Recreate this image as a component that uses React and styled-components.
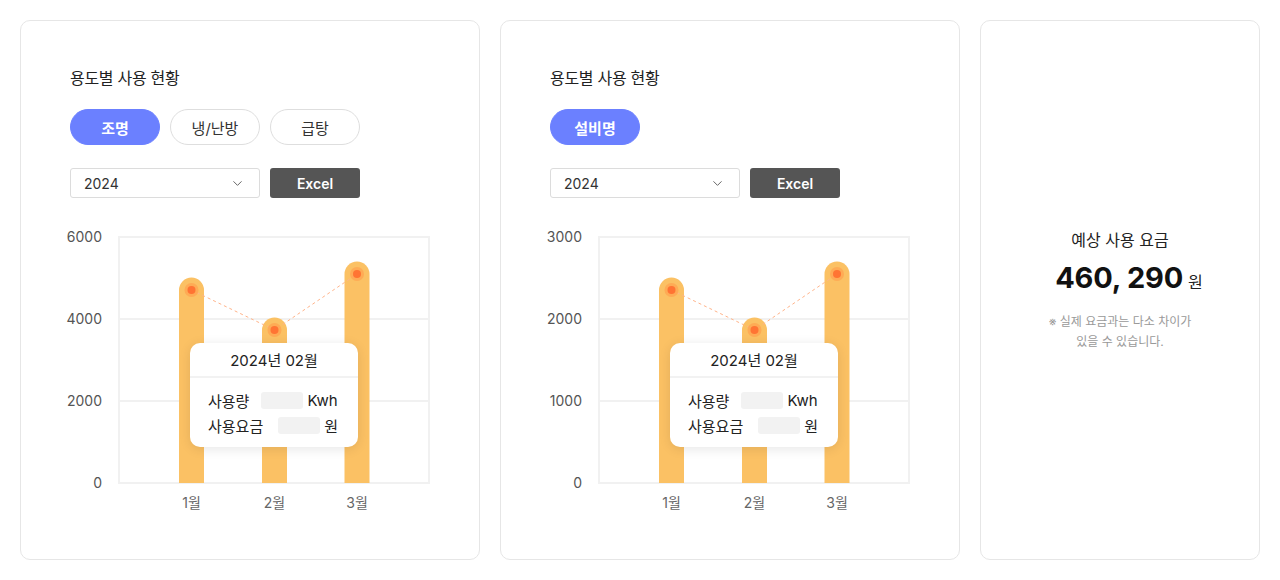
import React from "react";
import styled, { createGlobalStyle } from "styled-components";
import { ChevronDown } from "lucide-react";

const Global = createGlobalStyle`
  html, body { margin: 0; padding: 0; background: #fff; }
  body { font-family: Inter, "Noto Sans CJK KR", sans-serif; color: #222; }
  * { box-sizing: border-box; }
`;

const Page = styled.div`
  display: flex;
  gap: 20px;
  padding: 20px;
  width: 1280px;
  height: 580px;
`;

const Card = styled.div`
  width: ${(p) => p.$w}px;
  height: 540px;
  border: 1px solid #e6e6e6;
  border-radius: 10px;
  background: #fff;
  padding: 46px 0 0 49px;
  display: flex;
  flex-direction: column;
`;

const Title = styled.div`
  font-size: 16px;
  line-height: 22px;
  font-weight: 400;
  color: #222;
  letter-spacing: -0.3px;
`;

const PillRow = styled.div`
  display: flex;
  gap: 10px;
  margin-top: 20px;
`;

const Pill = styled.button`
  width: 90px;
  height: 36px;
  border-radius: 18px;
  font-family: inherit;
  font-size: 15px;
  font-weight: ${(p) => (p.$active ? 700 : 400)};
  color: ${(p) => (p.$active ? "#fff" : "#333")};
  background: ${(p) => (p.$active ? "#6b80ff" : "#fff")};
  border: 1px solid ${(p) => (p.$active ? "#6b80ff" : "#dedede")};
  padding: 0;
`;

const Controls = styled.div`
  display: flex;
  gap: 10px;
  margin-top: 23px;
`;

const Select = styled.div`
  width: 190px;
  height: 30px;
  border: 1px solid #dcdcdc;
  border-radius: 3px;
  display: flex;
  align-items: center;
  justify-content: space-between;
  padding: 0 14px 0 13px;
  font-size: 14px;
  color: #333;
`;

const ExcelBtn = styled.button`
  width: 90px;
  height: 30px;
  border: none;
  border-radius: 3px;
  background: #555;
  color: #fff;
  font-family: inherit;
  font-size: 14px;
  font-weight: 600;
  padding: 0;
`;

const ChartWrap = styled.div`
  position: relative;
  width: 390px;
  height: 295px;
  margin: 27px 0 0 -10px;
`;

const Tooltip = styled.div`
  position: absolute;
  left: 130px;
  top: 118px;
  width: 168px;
  height: 104px;
  background: #fff;
  border-radius: 10px;
  box-shadow: 0 2px 12px rgba(0, 0, 0, 0.1);
`;

const TipHead = styled.div`
  height: 35px;
  border-bottom: 2px solid #f2f2f2;
  display: flex;
  align-items: center;
  justify-content: center;
  font-size: 15px;
  color: #222;
`;

const TipBody = styled.div`
  padding: 10px 0 0 18px;
  display: flex;
  flex-direction: column;
`;

const TipRow = styled.div`
  display: flex;
  align-items: center;
  height: 25px;
  font-size: 15px;
  color: #222;
`;

const Blank = styled.span`
  display: inline-block;
  width: 42px;
  height: 17px;
  background: #f2f2f2;
  border-radius: 3px;
  margin: 0 4px 0 ${(p) => p.$ml}px;
`;

const SummaryCard = styled.div`
  width: 280px;
  height: 540px;
  border: 1px solid #e6e6e6;
  border-radius: 10px;
  display: flex;
  flex-direction: column;
  align-items: center;
  padding-top: 208px;
`;

const SumTitle = styled.div`
  font-size: 16px;
  line-height: 22px;
  font-weight: 400;
  color: #222;
`;

const Amount = styled.div`
  display: flex;
  align-items: baseline;
  gap: 5px;
  margin-top: 9px;
  margin-left: 18px;
`;

const Big = styled.span`
  font-size: 29px;
  line-height: 36px;
  font-weight: 700;
  color: #111;
  letter-spacing: -0.2px;
`;

const Won = styled.span`
  font-size: 16px;
  color: #222;
`;

const Note = styled.div`
  margin-top: 16px;
  font-size: 12px;
  line-height: 20px;
  color: #999;
  text-align: center;
`;

function Chart({ ticks, points }) {
  const gridY = [12, 94, 176, 258];
  const xs = [131.5, 214.5, 297];
  const bottom = 258;
  const r = 12.5;
  return (
    <svg width="390" height="295" viewBox="0 0 390 295">
      {gridY.map((y) => (
        <line key={y} x1="59" x2="370" y1={y} y2={y} stroke="#f1f1f1" strokeWidth="2" />
      ))}
      <line x1="59" x2="59" y1="11" y2="259" stroke="#f1f1f1" strokeWidth="2" />
      <line x1="369" x2="369" y1="11" y2="259" stroke="#f1f1f1" strokeWidth="2" />
      {ticks.map((t, i) => (
        <text
          key={t}
          x="42"
          y={gridY[i] + 5}
          textAnchor="end"
          fontSize="14"
          fill="#555"
          fontFamily="Inter, sans-serif"
        >
          {t}
        </text>
      ))}
      {xs.map((x, i) => (
        <path
          key={x}
          d={`M${x - r} ${bottom} V${points[i]} A${r} ${r} 0 0 1 ${x + r} ${points[i]} V${bottom} Z`}
          fill="#fbc164"
        />
      ))}
      <polyline
        points={xs.map((x, i) => `${x},${points[i]}`).join(" ")}
        fill="none"
        stroke="#ffb48a"
        strokeWidth="1"
        strokeDasharray="3 3"
      />
      {xs.map((x, i) => (
        <g key={"p" + x}>
          <circle cx={x} cy={points[i]} r="7" fill="#ffa14e" opacity="0.7" />
          <circle cx={x} cy={points[i]} r="4" fill="#ff7433" />
        </g>
      ))}
      {["1월", "2월", "3월"].map((m, i) => (
        <text
          key={m}
          x={xs[i]}
          y="283"
          textAnchor="middle"
          fontSize="14"
          fill="#666"
          fontFamily='Inter, "Noto Sans CJK KR", sans-serif'
        >
          {m}
        </text>
      ))}
    </svg>
  );
}

function UsagePanel({ pills, ticks }) {
  return (
    <Card $w={460}>
      <Title>용도별 사용 현황</Title>
      <PillRow>
        {pills.map((p, i) => (
          <Pill key={p} $active={i === 0}>
            {p}
          </Pill>
        ))}
      </PillRow>
      <Controls>
        <Select>
          <span>2024</span>
          <ChevronDown size={15} color="#666" strokeWidth={1.6} />
        </Select>
        <ExcelBtn>Excel</ExcelBtn>
      </Controls>
      <ChartWrap>
        <Chart ticks={ticks} points={[65, 105, 49]} />
        <Tooltip>
          <TipHead>2024년 02월</TipHead>
          <TipBody>
            <TipRow>
              사용량<Blank $ml={12} />Kwh
            </TipRow>
            <TipRow>
              사용요금<Blank $ml={15} />원
            </TipRow>
          </TipBody>
        </Tooltip>
      </ChartWrap>
    </Card>
  );
}

export default function App() {
  return (
    <>
      <Global />
      <Page>
        <UsagePanel pills={["조명", "냉/난방", "급탕"]} ticks={["6000", "4000", "2000", "0"]} />
        <UsagePanel pills={["설비명"]} ticks={["3000", "2000", "1000", "0"]} />
        <SummaryCard>
          <SumTitle>예상 사용 요금</SumTitle>
          <Amount>
            <Big>460, 290</Big>
            <Won>원</Won>
          </Amount>
          <Note>
            ※ 실제 요금과는 다소 차이가
            <br />
            있을 수 있습니다.
          </Note>
        </SummaryCard>
      </Page>
    </>
  );
}
